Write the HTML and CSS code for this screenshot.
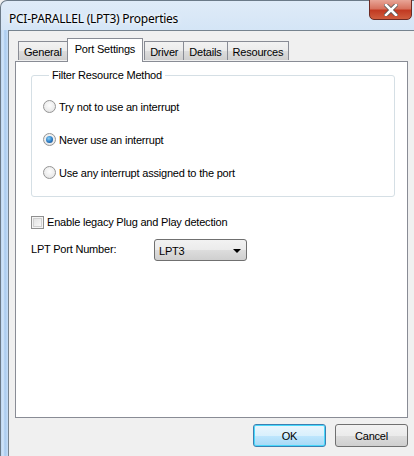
FILE: index.html
```html
<!DOCTYPE html>
<html>
<head>
<meta charset="utf-8">
<link rel="stylesheet" href="styles.css">
</head>
<body>
<div class="window">
  <div class="titlebar">
    <span class="title">PCI-PARALLEL (LPT3) Properties</span>
    <div class="close-btn">
      <svg width="14" height="12" viewBox="0 0 14 12"><path d="M2 1 L12 11 M12 1 L2 11" stroke="#555" stroke-width="4.2" stroke-linecap="square" fill="none"/><path d="M2 1 L12 11 M12 1 L2 11" stroke="#fff" stroke-width="2.6" stroke-linecap="square" fill="none"/></svg>
    </div>
  </div>
  <div class="frame">
    <div class="side"></div>
    <div class="client">
      <div class="tabs">
        <div class="tab">General</div>
        <div class="tab active">Port Settings</div>
        <div class="tab">Driver</div>
        <div class="tab">Details</div>
        <div class="tab">Resources</div>
      </div>
      <div class="panel">
        <fieldset class="group">
          <legend>Filter Resource Method</legend>
          <div class="radio-row"><span class="radio"></span>Try not to use an interrupt</div>
          <div class="radio-row"><span class="radio checked"></span>Never use an interrupt</div>
          <div class="radio-row"><span class="radio"></span>Use any interrupt assigned to the port</div>
        </fieldset>
        <div class="check-row"><span class="checkbox"></span>Enable legacy Plug and Play detection</div>
        <div class="port-row">
          <span class="port-label">LPT Port Number:</span>
          <div class="combo"><span>LPT3</span><span class="arrow"></span></div>
        </div>
      </div>
      <div class="buttons">
        <div class="btn default">OK</div>
        <div class="btn">Cancel</div>
      </div>
    </div>
  </div>
</div>
</body>
</html>
```

FILE: styles.css
```css
html, body {
  margin: 0;
  padding: 0;
  width: 414px;
  height: 456px;
  overflow: hidden;
  background: #f0f0f0;
}
.window {
  width: 420px;
  height: 460px;
  box-sizing: border-box;
  border-left: 1px solid #6b7a88;
  border-top: 1px solid #6b7a88;
  border-top-left-radius: 7px;
  background: linear-gradient(180deg, #dfebf8 0%, #d4e5f6 30px, #c3daf2 100%);
  display: flex;
  flex-direction: column;
  font-family: "Liberation Sans", Arial, sans-serif;
  font-size: 11px;
  letter-spacing: -0.2px;
  color: #000;
}
.titlebar {
  height: 29px;
  display: flex;
  align-items: flex-start;
  position: relative;
}
.title {
  font-family: "Noto Sans", "Open Sans", sans-serif;
  font-size: 12px;
  letter-spacing: -0.25px;
  padding: 9px 0 0 8px;
  color: #000;
  text-shadow: 0 0 6px #fff, 0 0 3px #fff;
}
.close-btn {
  position: absolute;
  left: 368px;
  top: -2px;
  width: 43px;
  height: 21px;
  box-sizing: border-box;
  border: 1px solid #6c2b24;
  border-radius: 0 0 5px 5px;
  background: linear-gradient(180deg, #e8a597 0%, #d7735f 45%, #c23a22 55%, #cf5d3e 100%);
  display: flex;
  align-items: center;
  justify-content: center;
}
.frame {
  flex: 1;
  display: flex;
}
.side {
  width: 7px;
  background: linear-gradient(90deg, #bcd6f1 0, #d3e6fa 2px, #a9cbef 4px, #c6def7 7px);
}
.client {
  flex: 1;
  background: #f0f0f0;
  border-left: 1px solid #76838f;
  border-top: 1px solid #76838f;
  display: flex;
  flex-direction: column;
  padding: 7px 0 0 6px;
}
.tabs {
  display: flex;
  align-items: flex-end;
  height: 23px;
  padding-left: 3px;
  position: relative;
  z-index: 1;
}
.tab {
  height: 19px;
  box-sizing: border-box;
  border: 1px solid #898c95;
  border-bottom: none;
  background: linear-gradient(180deg, #f2f2f2 0%, #ebebeb 50%, #dddddd 51%, #cfcfcf 100%);
  padding: 4px 5px 0 5px;
  margin-right: -1px;
  margin-bottom: 1px;
  line-height: 13px;
}
.tab.active {
  height: 24px;
  background: #fff;
  margin: 0 1px 0 0;
  padding: 4px 7px 0 7px;
  margin-bottom: -1px;
  line-height: 13px;
}
.panel {
  width: 393px;
  height: 357px;
  box-sizing: border-box;
  background: #fff;
  border: 1px solid #898c95;
  padding: 7px 11px 0 15px;
}
.group {
  margin: 0;
  height: 128px;
  box-sizing: border-box;
  border: 1px solid #d5dfe5;
  border-radius: 3px;
  padding: 9px 0 0 11px;
  width: 364px;
}
.group legend {
  padding: 0 3px;
  margin-left: 6px;
}
.radio-row {
  display: flex;
  align-items: center;
  height: 33px;
}
.radio {
  width: 13px;
  height: 13px;
  box-sizing: border-box;
  border-radius: 50%;
  border: 1px solid #959595;
  background: radial-gradient(circle at 50% 40%, #fdfdfd 0, #ececec 60%, #d8d8d8 100%);
  margin-right: 3px;
  position: relative;
}
.radio.checked::after {
  content: "";
  position: absolute;
  left: 2px;
  top: 2px;
  width: 7px;
  height: 7px;
  border-radius: 50%;
  background: radial-gradient(circle at 40% 35%, #8ad0f5 0, #2a7bc4 55%, #0f3f7a 100%);
}
.check-row {
  display: flex;
  align-items: center;
  margin-top: 17px;
  height: 16px;
}
.checkbox {
  width: 13px;
  height: 13px;
  box-sizing: border-box;
  border: 1px solid #8f8f8f;
  background: linear-gradient(135deg, #dcdcdc 0%, #f0f0f0 60%, #fff 100%);
  box-shadow: inset 0 0 0 1px #f4f4f4, inset 0 0 0 2px #d0d0d0;
  margin-right: 3px;
}
.port-row {
  display: flex;
  align-items: flex-start;
  margin-top: 9px;
}
.port-label {
  width: 123px;
  padding-top: 4px;
}
.combo {
  width: 93px;
  height: 22px;
  box-sizing: border-box;
  border: 1px solid #707070;
  border-radius: 3px;
  background: linear-gradient(180deg, #f2f2f2 0%, #ebebeb 50%, #dddddd 51%, #cfcfcf 100%);
  display: flex;
  align-items: center;
  justify-content: space-between;
  padding: 1px 5px 0 4px;
}
.arrow {
  width: 0;
  height: 0;
  border-left: 4px solid transparent;
  border-right: 4px solid transparent;
  border-top: 4px solid #000;
}
.buttons {
  display: flex;
  justify-content: flex-end;
  gap: 9px;
  padding: 6px 0 0 0;
  width: 393px;
  box-sizing: border-box;
}
.btn {
  width: 73px;
  height: 23px;
  box-sizing: border-box;
  border: 1px solid #707070;
  border-radius: 3px;
  background: linear-gradient(180deg, #f2f2f2 0%, #ebebeb 50%, #dddddd 51%, #cfcfcf 100%);
  display: flex;
  align-items: center;
  justify-content: center;
}
.btn.default {
  border-color: #3c7fb1;
  box-shadow: inset 0 0 0 1px #48d8fb;
  background: linear-gradient(180deg, #eaf6fd 0%, #d9f0fc 50%, #bee6fd 51%, #a7d9f5 100%);
}
```
